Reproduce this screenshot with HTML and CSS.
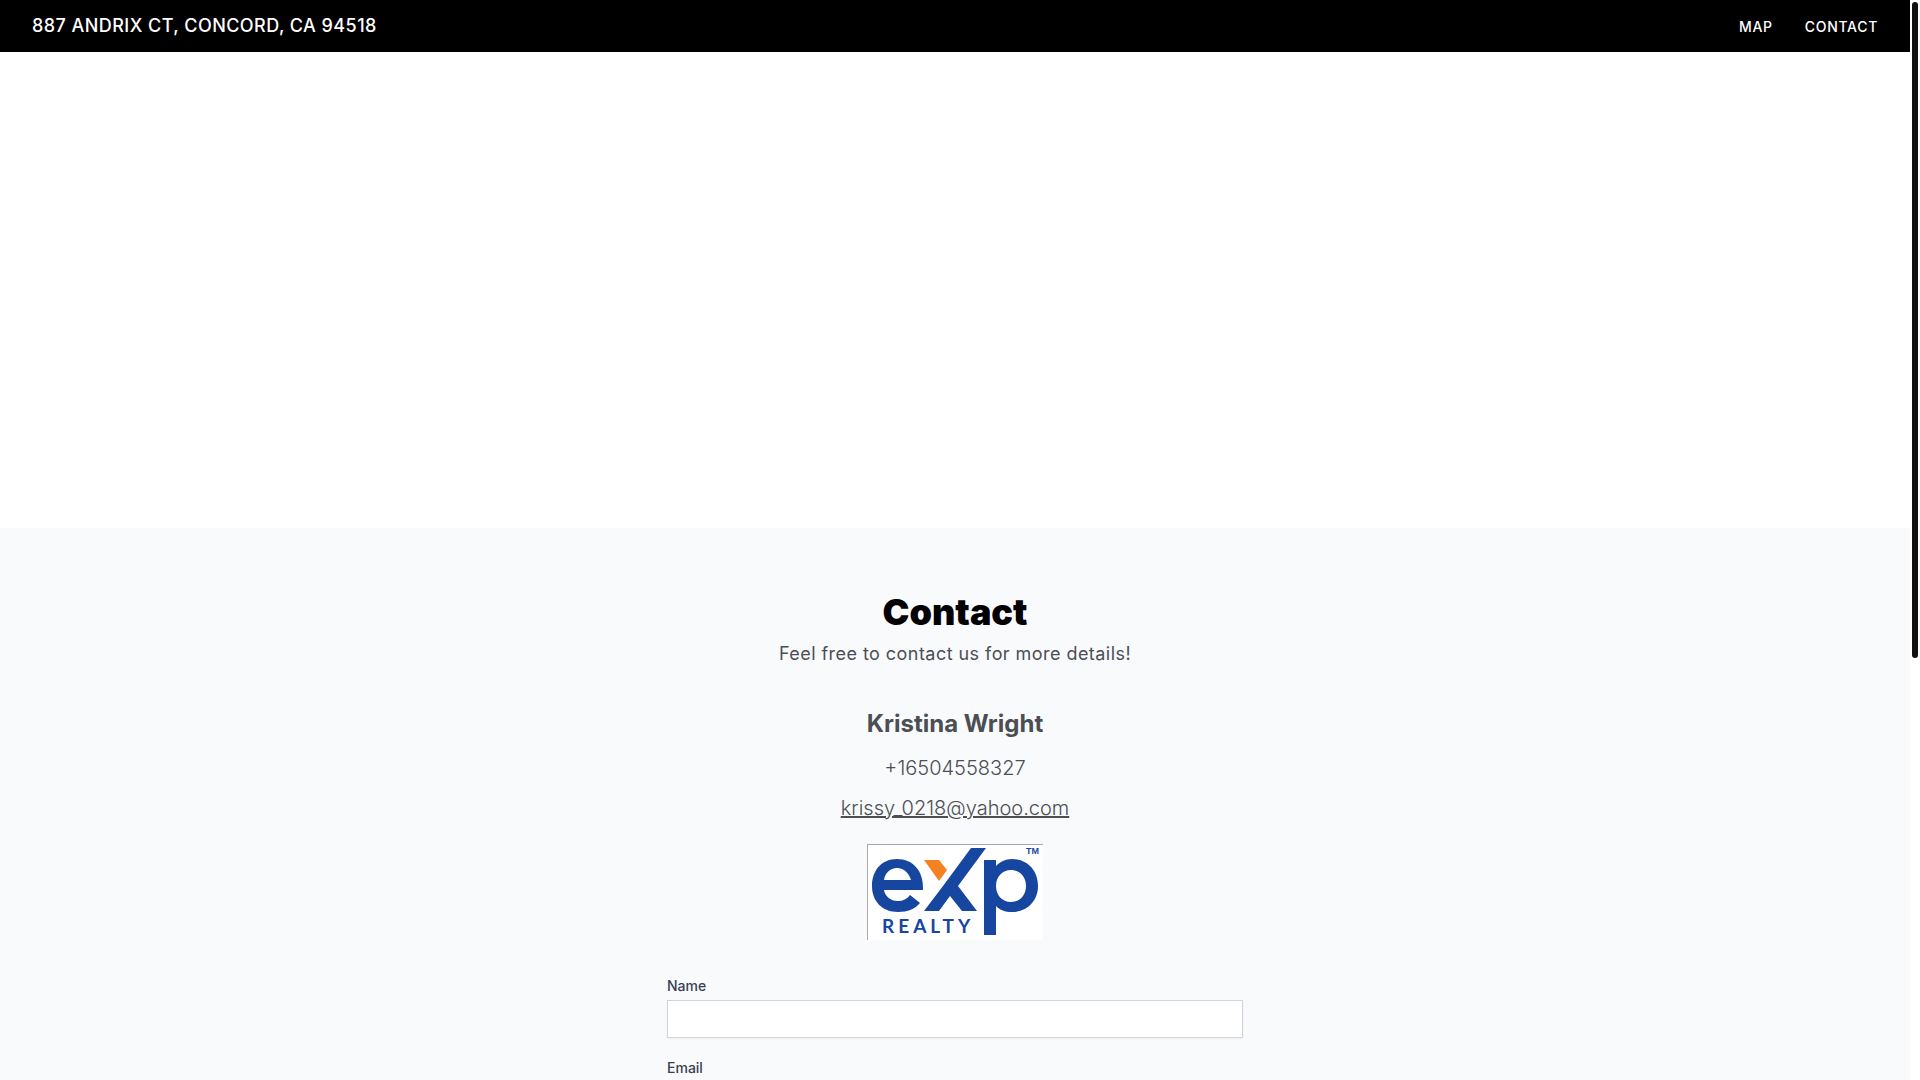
FILE: index.html
```html
<!DOCTYPE html>
<html lang="en">
  <head>
    <meta charset="UTF-8" />
    <meta name="viewport" content="width=device-width, initial-scale=1.0" />
    <title>887 Andrix Ct, Concord, CA 94518</title>
    <link rel="stylesheet" href="styles.css">
  </head>
  <body>
    <div class="page">
      <header class="header">
        <a class="address" href="#">887 Andrix Ct, Concord, CA 94518</a>
        <nav class="nav">
          <a href="#map">Map</a>
          <a href="#contact">Contact</a>
        </nav>
      </header>

      <section id="map"></section>

      <section id="contact">
        <h2>Contact</h2>
        <p class="subtitle">Feel free to contact us for more details!</p>

        <div class="agent">
          <h3>Kristina Wright</h3>
          <p>+16504558327</p>
          <a href="mailto:krissy_0218@yahoo.com">krissy_0218@yahoo.com</a>
          <svg class="logo" viewBox="0 0 176 96" role="img" aria-label="eXp Realty">
            <rect width="176" height="96" fill="#fff" />
            <path d="M0 .5H176M.5 0V96" stroke="#aaa" fill="none" />
            <g fill="#1746a0">
              <path fill-rule="evenodd" d="M56 46H17C18 52 23 57 31 57C36 57 40 55 43 51L53 59C48 65 41 68 31 68C15 68 5 57 5 42C5 26 15 15 30 15C46 15 57 27 56 46ZM17 36H44C42 29 37 24 30 24C23 24 18 29 17 36Z" />
              <path d="M104 4H119L91 42L110 67H95L83 52L72 67H57L76 42Z" />
              <path fill-rule="evenodd" d="M117 16H129V22C133 18 138 15 145 15C160 15 171 26 171 42C171 57 160 68 145 68C138 68 133 66 129 62V91H117ZM144 26C135 26 129 33 129 42C129 51 135 58 144 58C153 58 159 51 159 42C159 33 153 26 144 26Z" />
              <text class="logo-realty" x="15" y="89">REALTY</text>
              <text class="logo-tm" x="159" y="10">TM</text>
            </g>
            <path d="M57 16H72L80 26L72 37Z" fill="#f58220" />
          </svg>
        </div>

        <form class="contact-form">
          <div class="field">
            <label for="name">Name</label>
            <input type="text" id="name" name="name" />
          </div>
          <div class="field">
            <label for="email">Email</label>
            <input type="email" id="email" name="email" />
          </div>
        </form>
      </section>
    </div>
    <div class="scrollbar">
      <div class="thumb"></div>
    </div>
  </body>
</html>
```
FILE: styles.css
```css
* {
  box-sizing: border-box;
}
body {
  display: flex;
  height: 100vh;
  margin: 0;
  overflow: hidden;
  background-color: white;
  font-family: Inter, sans-serif;
}
h2,
h3,
p {
  margin: 0;
}
.page {
  flex: 1;
  overflow: hidden;
}

.header {
  display: flex;
  justify-content: space-between;
  align-items: baseline;
  padding: 12px 32px;
  background-color: black;
}
.header a {
  color: white;
  text-decoration: none;
  text-transform: uppercase;
}
.address {
  font-size: 18px;
  font-weight: 500;
  line-height: 28px;
  letter-spacing: 0.025em;
}
.nav {
  display: flex;
  gap: 32px;
  font-size: 14px;
  font-weight: 500;
  line-height: 20px;
  letter-spacing: 0.05em;
}

#map {
  height: 476px;
}

#contact {
  padding: 64px 32px;
  background-color: #f9fafc;
  text-align: center;
}
#contact h2 {
  font-size: 36px;
  font-weight: 900;
  line-height: 40px;
}
.subtitle {
  margin-top: 8px;
  color: #4b4f54;
  font-size: 18px;
  line-height: 28px;
  letter-spacing: 0.025em;
}

.agent {
  display: flex;
  flex-direction: column;
  align-items: center;
  gap: 12px;
  margin-top: 40px;
  color: #4b4f54;
  font-size: 20px;
  font-weight: 300;
  line-height: 28px;
}
.agent h3 {
  margin-bottom: 2px;
  font-size: 24px;
  font-weight: 700;
  line-height: 32px;
}
.agent a {
  color: inherit;
}
.logo {
  width: 176px;
  height: 96px;
  margin-top: 10px;
}
.logo-realty {
  font: 700 19px Lato, sans-serif;
  letter-spacing: 4px;
}
.logo-tm {
  font: 700 9px "Liberation Sans", sans-serif;
}

.contact-form {
  display: grid;
  gap: 20px;
  max-width: 576px;
  margin: 36px auto 0;
  text-align: left;
}
.field label {
  display: block;
  color: #374151;
  font-size: 14px;
  font-weight: 500;
  line-height: 20px;
}
.field input {
  display: block;
  width: 100%;
  height: 38px;
  margin-top: 4px;
  padding: 8px 12px;
  border: 1px solid #d1d5db;
  background-color: white;
  box-shadow: 0 1px 2px rgba(0, 0, 0, 0.05);
  font: inherit;
}

.scrollbar {
  width: 10px;
  padding: 2px;
  background-color: white;
}
.thumb {
  height: 61%;
  border-radius: 3px;
  background-color: #111;
}
```
